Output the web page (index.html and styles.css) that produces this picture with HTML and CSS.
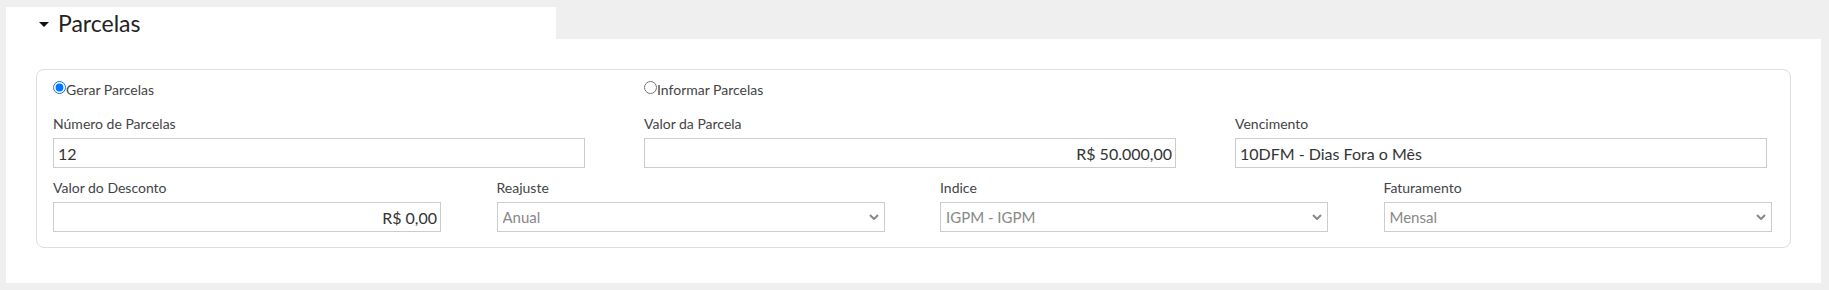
FILE: index.html
```html
<!DOCTYPE html>
<html lang="pt">
<head>
    <meta charset="UTF-8">
    <title>Parcelas</title>
    <link rel="stylesheet" href="styles.css">
</head>
<body>

    <div class="tab">
        <span class="caret"></span>
        <h2>Parcelas</h2>
    </div>

    <div class="panel">
        <fieldset class="box">
            <div class="row row3 radios">
                <label class="radio"><input type="radio" name="modo" checked>Gerar Parcelas</label>
                <label class="radio"><input type="radio" name="modo">Informar Parcelas</label>
            </div>

            <div class="row row3">
                <div class="field">
                    <label>Número de Parcelas</label>
                    <input type="text" value="12">
                </div>
                <div class="field">
                    <label>Valor da Parcela</label>
                    <input type="text" class="money" value="R$ 50.000,00">
                </div>
                <div class="field">
                    <label>Vencimento</label>
                    <input type="text" value="10DFM - Dias Fora o Mês">
                </div>
            </div>

            <div class="row row4">
                <div class="field">
                    <label>Valor do Desconto</label>
                    <input type="text" class="money" value="R$ 0,00">
                </div>
                <div class="field">
                    <label>Reajuste</label>
                    <div class="select">
                        <select><option>Anual</option></select>
                        <svg width="10" height="6" viewBox="0 0 10 6"><path d="M1 1 L5 5 L9 1" fill="none" stroke="#888" stroke-width="2"/></svg>
                    </div>
                </div>
                <div class="field">
                    <label>Indice</label>
                    <div class="select">
                        <select><option>IGPM - IGPM</option></select>
                        <svg width="10" height="6" viewBox="0 0 10 6"><path d="M1 1 L5 5 L9 1" fill="none" stroke="#888" stroke-width="2"/></svg>
                    </div>
                </div>
                <div class="field">
                    <label>Faturamento</label>
                    <div class="select">
                        <select><option>Mensal</option></select>
                        <svg width="10" height="6" viewBox="0 0 10 6"><path d="M1 1 L5 5 L9 1" fill="none" stroke="#888" stroke-width="2"/></svg>
                    </div>
                </div>
            </div>
        </fieldset>
    </div>

</body>
</html>
```

FILE: styles.css
```css
* { font-family: Lato, "Liberation Sans", sans-serif; margin: 0; padding: 0; box-sizing: border-box; }
body { background: #efefef; padding: 7px 8px 7px 6px; color: #444; }
.tab { background: white; width: 550px; height: 32px; display: flex; align-items: center; padding-left: 33px; }
.caret { width: 0; height: 0; border-left: 5.5px solid transparent; border-right: 5.5px solid transparent; border-top: 5px solid #111; margin-right: 9px; margin-top: 2px; }
.tab h2 { font-size: 23px; font-weight: normal; color: #222; line-height: 32px; }
.panel { background: white; height: 244px; padding: 30px 30px 0 30px; }
.box { border: 1px solid #ddd; border-radius: 8px; height: 179px; padding: 10px 0 0 16px; }
.row { display: grid; }
.row3 { grid-template-columns: repeat(3, 532px); column-gap: 59px; }
.row4 { grid-template-columns: repeat(4, 388px); column-gap: 55.5px; margin-top: 10px; }
.radios { margin-bottom: 14px; }
.radio { font-size: 14px; line-height: 20px; display: flex; align-items: center; color: #444; }
.radio input { margin: 0; width: 13px; height: 13px; position: relative; top: -3px; }
.field label { display: block; font-size: 14px; line-height: 20px; margin-bottom: 4px; color: #444; }
.field input { width: 100%; height: 30px; border: 1px solid #ccc; padding: 0 4px; font-size: 16px; color: #333; background: white; }
.field input.money { text-align: right; padding-right: 3px; }
.select { position: relative; }
.select select { width: 100%; height: 30px; border: 1px solid #ccc; padding: 0 5px; font-size: 15px; color: #888; background: white; appearance: none; -webkit-appearance: none; border-radius: 0; }
.select svg { position: absolute; right: 6px; top: 12px; }
```
